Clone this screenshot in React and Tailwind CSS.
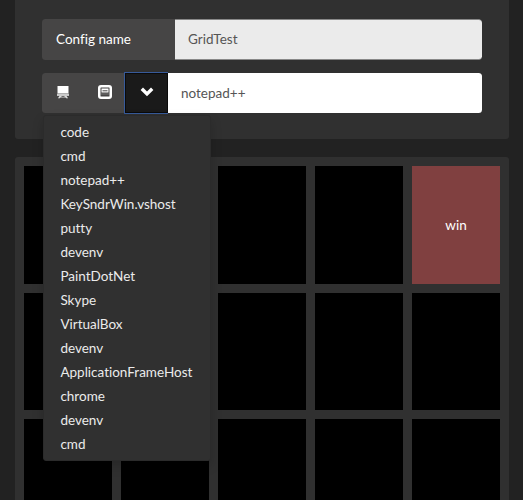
const processes = [
  'code', 'cmd', 'notepad++', 'KeySndrWin.vshost', 'putty', 'devenv', 'PaintDotNet',
  'Skype', 'VirtualBox', 'devenv', 'ApplicationFrameHost', 'chrome', 'devenv', 'cmd',
];

const cells = Array.from({ length: 15 }, (_, i) => (i === 4 ? 'win' : ''));

function BlackboardIcon() {
  return (
    <svg width="14" height="14" viewBox="0 0 14 14" fill="white">
      <path d="M1.5 1h11v7.6h-11z" />
      <path d="M1 8.6h12v1H1z" fill="#aaa" />
      <path d="M1 9.4h12v1.3H1z" />
      <path d="M3.6 10.7h2.2l-.5 1h3.4l-.5-1h2.2l1.7 2.6h-2l-.6-.8h-5l-.6.8h-2z" fill="#ddd" />
    </svg>
  );
}

function ModalWindowIcon() {
  return (
    <svg width="14" height="14" viewBox="0 0 14 14">
      <rect width="14" height="14" rx="3" fill="white" />
      <rect x="2.5" y="2.5" width="9" height="9" rx=".5" fill="#464545" />
      <path d="M3.5 3.5h7v4h-7z" fill="white" />
      <path d="M4.5 5.3h5v1h-5z" fill="#464545" />
      <path d="M3 8.5h8v1H3z" fill="#777" />
    </svg>
  );
}

function ChevronIcon() {
  return (
    <svg width="14" height="10" viewBox="0 0 14 10" fill="white">
      <path d="M.6 3 3 .6l4 3.9L11 .6 13.4 3 7 9.3z" />
    </svg>
  );
}

function ProcessMenu() {
  return (
    <ul className="absolute left-px top-[42px] z-10 w-[168px] rounded-[3px] border border-[#2b2b2b] bg-[#303030] py-1 shadow-[0_5px_11px_rgba(0,0,0,0.18)]">
      {processes.map((name, i) => (
        <li key={i} className="h-6 pl-[16.4px] leading-6 text-[#ebebeb]">{name}</li>
      ))}
    </ul>
  );
}

export default function App() {
  return (
    <div className="h-[500px] overflow-hidden bg-[#222222] pl-[15px] pr-3.5 font-[Lato,sans-serif] text-[13.5px] text-white [font-variant-ligatures:none]">
      <section className="flex h-[139px] flex-col gap-[13px] rounded-b-[3px] bg-[#303030] px-[27px] pt-[19px]">
        <div className="flex h-[41px] shrink-0 overflow-hidden rounded-[3.5px]">
          <div className="flex w-[133px] items-center bg-[#464545] pl-3.5">Config name</div>
          <div className="flex flex-1 items-center rounded-r-[3.5px] border-y border-[#888] bg-[#ebebeb] pl-[13px] text-[#555]">GridTest</div>
        </div>
        <div className="relative flex h-10 shrink-0">
          <button className="flex w-[42px] items-center justify-center rounded-l-[3.5px] bg-[#464545] pb-0.5">
            <BlackboardIcon />
          </button>
          <button className="flex w-[40px] items-center justify-center bg-[#464545] pb-0.5 pl-0.5">
            <ModalWindowIcon />
          </button>
          <button className="-my-px flex w-[44px] items-center justify-center rounded-l-[1px] border border-r-0 border-[#375a9a] bg-[#1a1a1a] pb-[3px] shadow-[inset_0_0_0_1px_#0a0a0a]">
            <ChevronIcon />
          </button>
          <div className="flex flex-1 items-center rounded-r-[3.5px] bg-white pl-[13px] text-[#555]">notepad++</div>
          <ProcessMenu />
        </div>
      </section>
      <section className="mt-[18px] grid grid-cols-[repeat(5,88px)] auto-rows-[117.5px] gap-[9px] rounded-t-[3px] bg-[#303030] p-[9px]">
        {cells.map((label, i) => (
          <div key={i} className={`flex items-center justify-center ${label ? 'bg-[#804040]' : 'bg-black'}`}>{label}</div>
        ))}
      </section>
    </div>
  );
}
